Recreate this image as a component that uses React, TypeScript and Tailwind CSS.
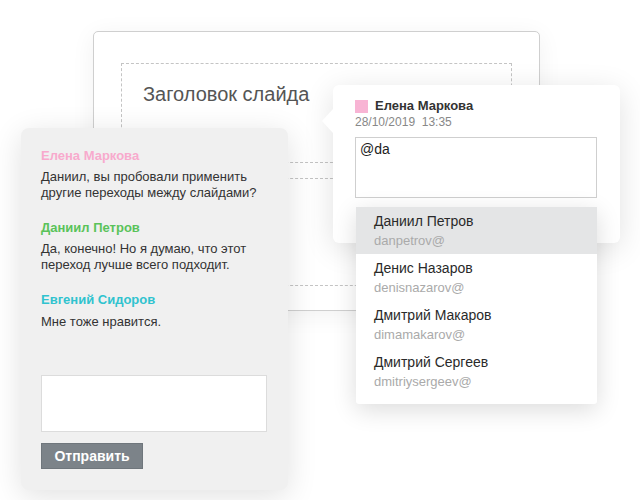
import React from "react";

const font = { fontFamily: '"Liberation Sans", Arial, sans-serif' };

const users = [
  { name: "Даниил Петров", email: "danpetrov@", active: true },
  { name: "Денис Назаров", email: "denisnazarov@" },
  { name: "Дмитрий Макаров", email: "dimamakarov@" },
  { name: "Дмитрий Сергеев", email: "dmitriysergeev@" },
];

export default function App() {
  return (
    <div className="relative w-[640px] h-[500px] bg-white overflow-hidden" style={font}>
      {/* Slide */}
      <div className="absolute left-[93px] top-[31px] w-[447px] h-[280px] rounded-[5px] border border-[#cfcfcf] bg-white shadow-[0_4px_24px_rgba(0,0,0,0.06)]">
        <div className="absolute left-[27px] top-[31px] w-[391px] h-[100px] border border-dashed border-[#c4c4c4]">
          <div className="pl-[21px] pt-[18px] text-[20px] text-[#555] leading-[24px]">Заголовок слайда</div>
        </div>
        <div className="absolute left-[27px] top-[146px] w-[391px] h-[108px] border border-dashed border-[#c4c4c4]" />
      </div>

      {/* Left comments panel */}
      <div className="absolute left-[21px] top-[128px] w-[267px] h-[362px] rounded-[8px] bg-[#f0f0f0] shadow-[0_6px_30px_rgba(0,0,0,0.12)] px-[20px] pt-[20px] flex flex-col">
        <div className="text-[13px] font-bold text-[#f8aacd] leading-[16px]">Елена Маркова</div>
        <div className="mt-[5px] text-[13px] text-[#333] leading-[16px]">
          Даниил, вы пробовали применить<br />другие переходы между слайдами?
        </div>
        <div className="mt-[19px] text-[13px] font-bold text-[#5ac35a] leading-[16px]">Даниил Петров</div>
        <div className="mt-[5px] text-[13px] text-[#333] leading-[16px]">
          Да, конечно! Но я думаю, что этот<br />переход лучше всего подходит.
        </div>
        <div className="mt-[19px] text-[13px] font-bold text-[#30c3cf] leading-[16px]">Евгений Сидоров</div>
        <div className="mt-[6px] text-[13px] text-[#333] leading-[16px]">Мне тоже нравится.</div>
        <div className="mt-[45px] w-[226px] h-[57px] bg-white border border-[#dcdcdc]" />
        <div className="mt-[11px] w-[102px] h-[26px] bg-[#7c8389] text-white text-[14px] font-bold flex items-center justify-center border border-[#6f767c]">
          Отправить
        </div>
      </div>

      {/* Popup */}
      <div className="absolute left-[333px] top-[85px] w-[287px] h-[158px] rounded-[6px] bg-white shadow-[0_6px_30px_rgba(0,0,0,0.12)] px-[22px] pt-[13px]">
        <div className="absolute left-[-11px] top-[24px] w-0 h-0 border-t-[12px] border-b-[12px] border-r-[11px] border-t-transparent border-b-transparent border-r-white" />
        <div className="flex items-center gap-[7px]">
          <div className="w-[13px] h-[13px] bg-[#f8b4d4]" />
          <div className="text-[13px] font-bold text-[#333] leading-[16px]">Елена Маркова</div>
        </div>
        <div className="mt-[1px] text-[12px] text-[#888] leading-[15px] whitespace-pre">28/10/2019  13:35</div>
        <div className="mt-[7px] w-[242px] h-[61px] border border-[#cfcfcf] px-[4px] pt-[3px] text-[14px] text-[#222] leading-[16px]">@da</div>
      </div>

      {/* Dropdown */}
      <div className="absolute left-[356px] top-[207px] w-[241px] h-[197px] rounded-b-[3px] bg-white shadow-[0_6px_24px_rgba(0,0,0,0.14)] flex flex-col">
        {users.map((u) => (
          <div
            key={u.email}
            className={
              "h-[47px] pl-[18px] pt-[6px] " + (u.active ? "bg-[#e4e5e6]" : "bg-white")
            }
          >
            <div className="text-[14px] text-[#2a2a2a] leading-[17px]">{u.name}</div>
            <div className="mt-[3px] text-[13px] text-[#aaa] leading-[16px]">{u.email}</div>
          </div>
        ))}
      </div>
    </div>
  );
}
